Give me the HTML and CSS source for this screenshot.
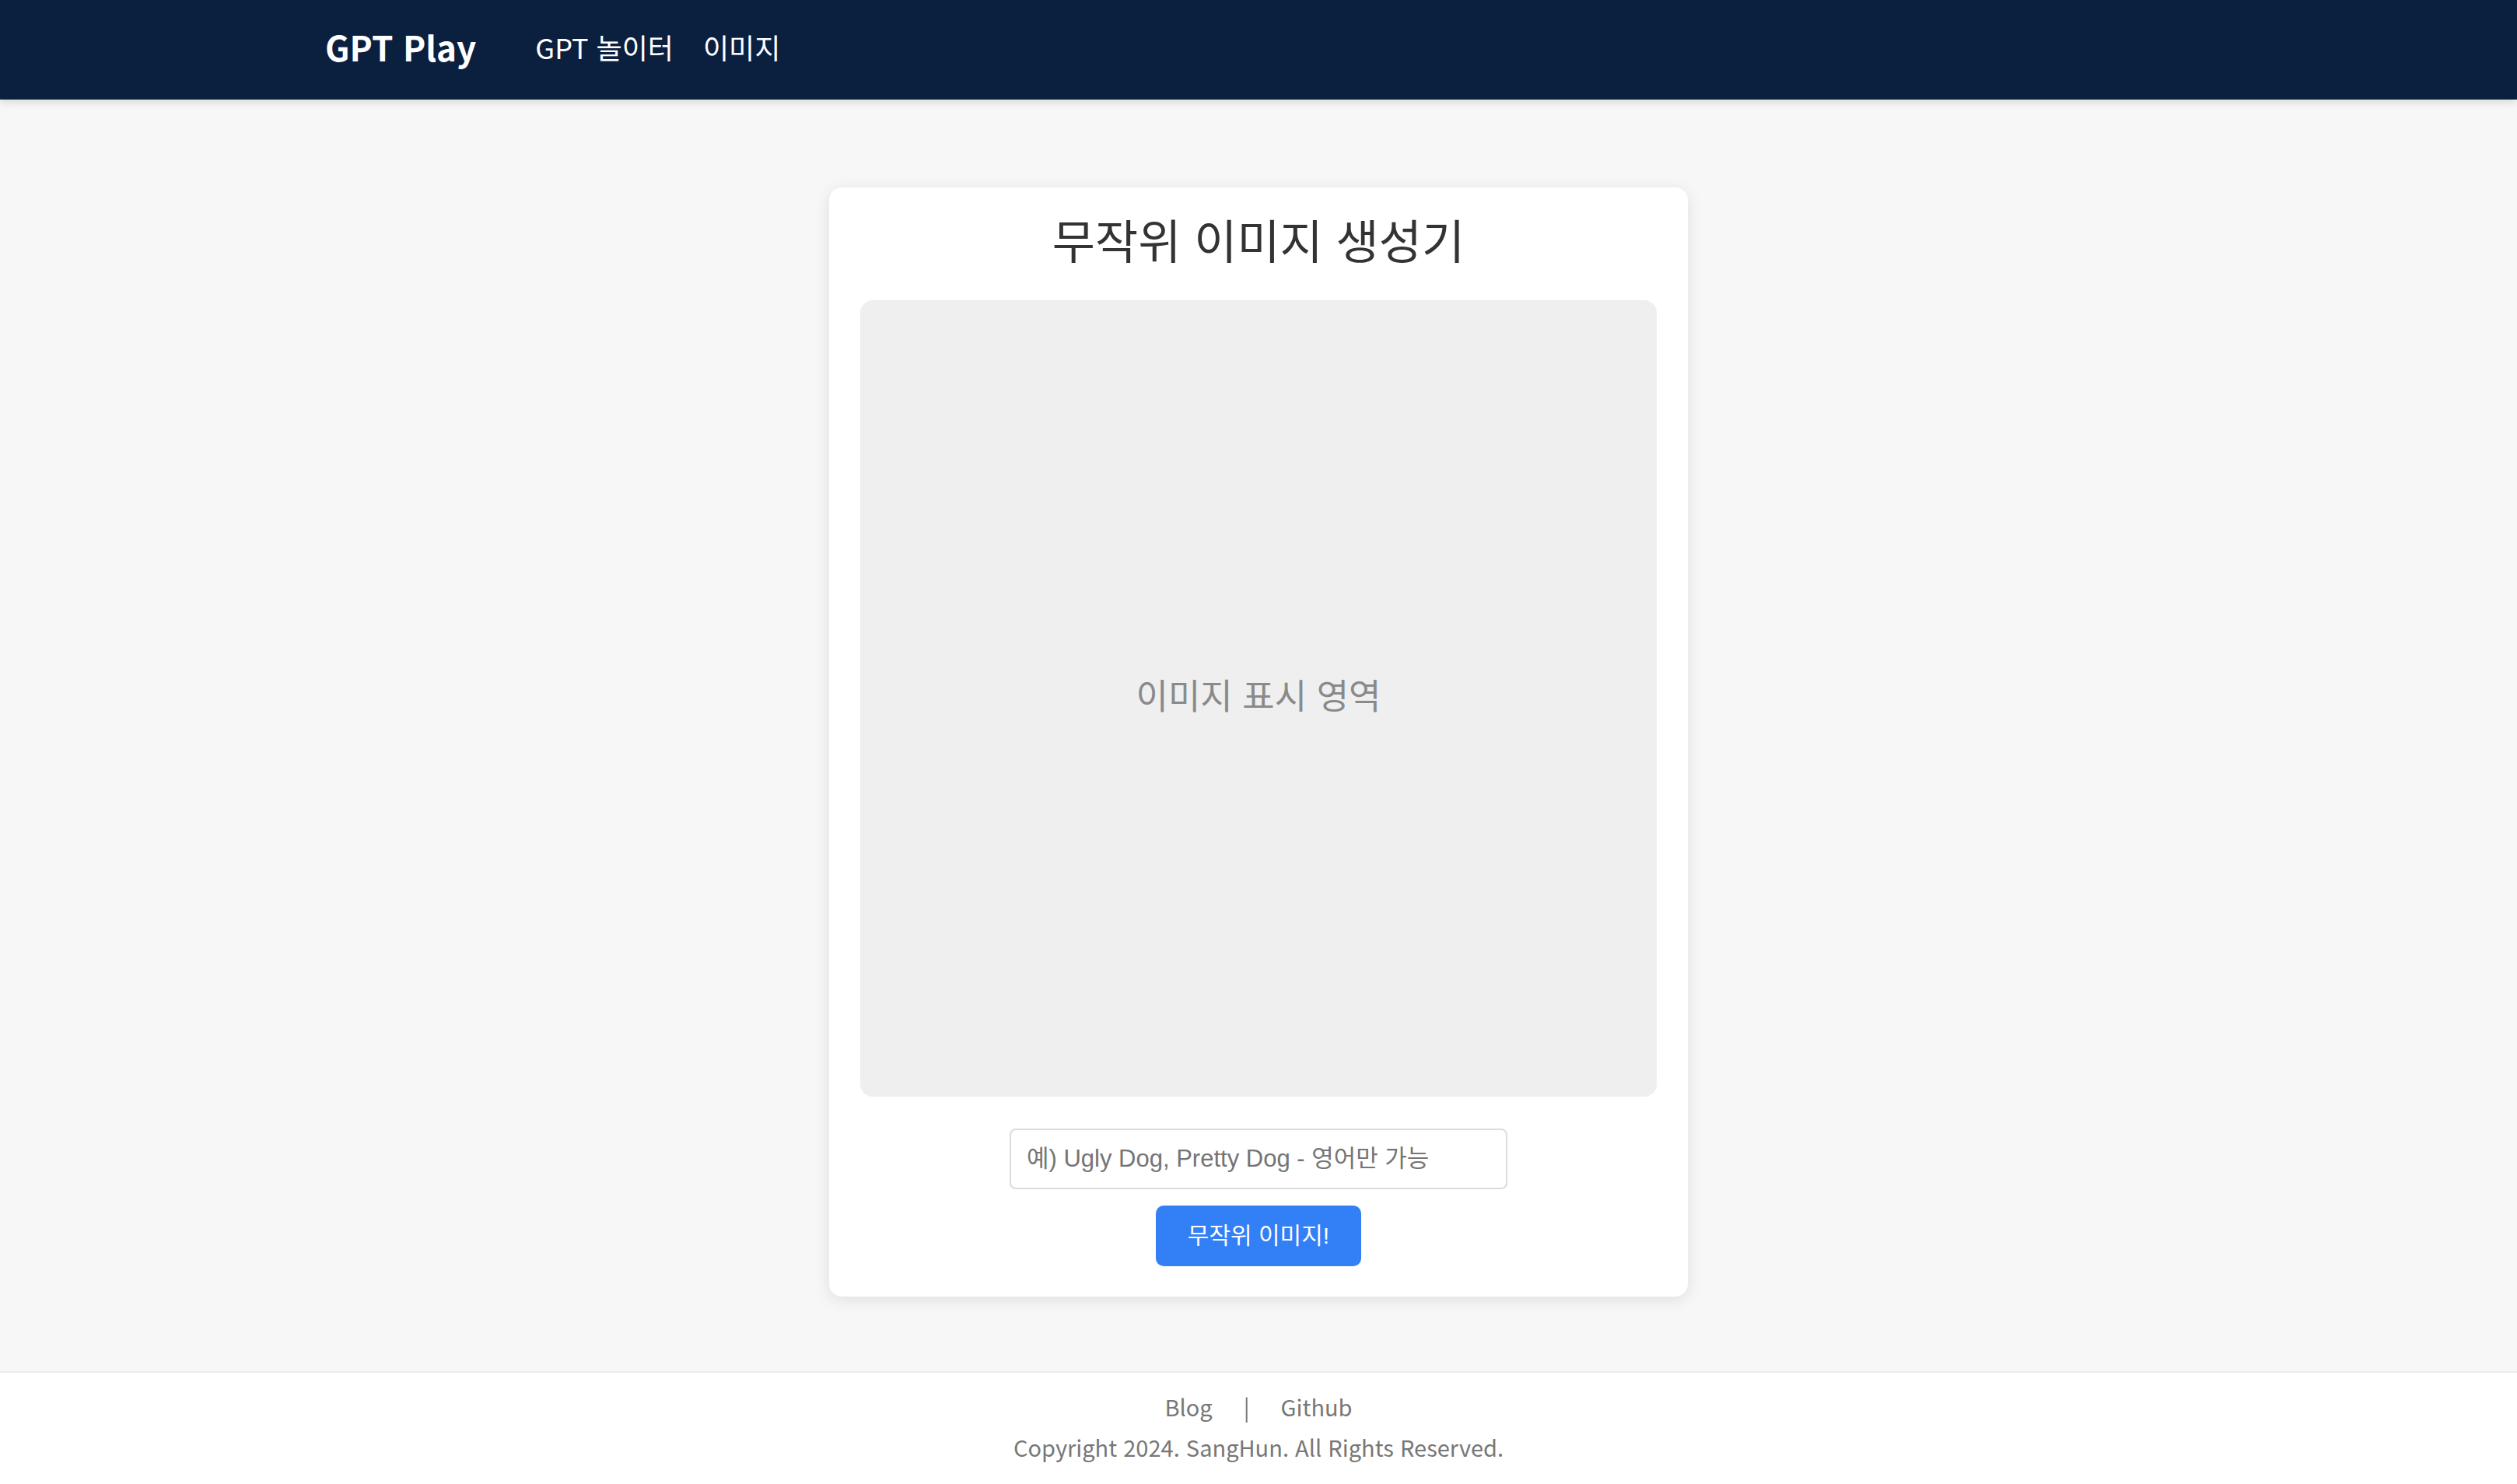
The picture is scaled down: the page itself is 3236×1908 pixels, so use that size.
FILE: index.html
```html
<!DOCTYPE html>
<html lang="ko">
<head>
<meta charset="utf-8">
<title>GPT Play</title>
<link rel="stylesheet" href="styles.css">
</head>
<body>
<header class="site-header">
  <div class="header-inner">
    <a class="brand" href="#">GPT Play</a>
    <nav class="nav">
      <a class="nav-link" href="#">GPT 놀이터</a>
      <a class="nav-link" href="#">이미지</a>
    </nav>
  </div>
</header>
<main class="main">
  <section class="card">
    <h1 class="card-title">무작위 이미지 생성기</h1>
    <div class="image-area">이미지 표시 영역</div>
    <input class="prompt-input" type="text" placeholder="예) Ugly Dog, Pretty Dog - 영어만 가능">
    <button class="generate-btn" type="button">무작위 이미지!</button>
  </section>
</main>
<footer class="site-footer">
  <div class="footer-links">
    <a class="footer-link" href="#">Blog</a>
    <span class="footer-sep">|</span>
    <a class="footer-link" href="#">Github</a>
  </div>
  <div class="copyright">Copyright 2024. SangHun. All Rights Reserved.</div>
</footer>
</body>
</html>
```

FILE: styles.css
```css
* { box-sizing: border-box; }

html, body { height: 100%; }

body {
  margin: 0;
  min-height: 100vh;
  display: flex;
  flex-direction: column;
  background: #f7f7f7;
  font-family: "Noto Sans CJK KR", "Noto Sans", sans-serif;
  color: #333;
}

a { text-decoration: none; }

.site-header {
  background: #0b1f3f;
  height: 128px;
  box-shadow: 0 4px 10px rgba(0, 0, 0, 0.12);
  position: relative;
  z-index: 1;
}

.header-inner {
  width: 2400px;
  margin: 0 auto;
  height: 100%;
  padding-bottom: 8px;
  display: flex;
  align-items: center;
}

.brand {
  color: #fff;
  font-weight: 700;
  font-size: 44px;
  margin-right: 76px;
}

.nav {
  display: flex;
  gap: 38px;
}

.nav-link {
  color: #fff;
  font-size: 36px;
}

.main {
  flex: 1;
  display: flex;
  justify-content: center;
  align-items: flex-start;
  padding-top: 113px;
}

.card {
  width: 1104px;
  background: #fff;
  border-radius: 16px;
  padding: 26px 40px 39px;
  box-shadow: 0 4px 20px rgba(0, 0, 0, 0.1);
  display: flex;
  flex-direction: column;
  align-items: center;
}

.card-title {
  margin: 0;
  font-size: 60px;
  line-height: 80px;
  font-weight: 400;
  color: #333;
}

.image-area {
  margin-top: 39px;
  width: 1024px;
  height: 1024px;
  border-radius: 16px;
  background: #efefef;
  display: flex;
  align-items: center;
  justify-content: center;
  padding-bottom: 12px;
  font-size: 45px;
  color: #8a8a8a;
}

.prompt-input {
  margin-top: 41px;
  width: 640px;
  height: 78px;
  border: 2px solid #dcdcdc;
  border-radius: 8px;
  padding: 0 20px;
  font-family: "Liberation Sans", "Noto Sans CJK KR", sans-serif;
  font-size: 31px;
  color: #333;
  outline: none;
}

.prompt-input::placeholder {
  color: #757575;
}

.generate-btn {
  margin-top: 21px;
  width: 264px;
  height: 78px;
  padding: 0 0 6px;
  border: none;
  border-radius: 10px;
  background: #337ff5;
  color: #fff;
  font-family: "Liberation Sans", "Noto Sans CJK KR", sans-serif;
  font-size: 30px;
  cursor: pointer;
}

.site-footer {
  background: #fff;
  border-top: 2px solid #ebebeb;
  padding: 17px 0 22px;
  text-align: center;
  color: #777;
  font-size: 29px;
}

.footer-links {
  display: flex;
  justify-content: center;
  gap: 40px;
  line-height: 52px;
}

.footer-link { color: #777; }

.footer-sep { color: #777; }

.copyright {
  line-height: 52px;
}
```
